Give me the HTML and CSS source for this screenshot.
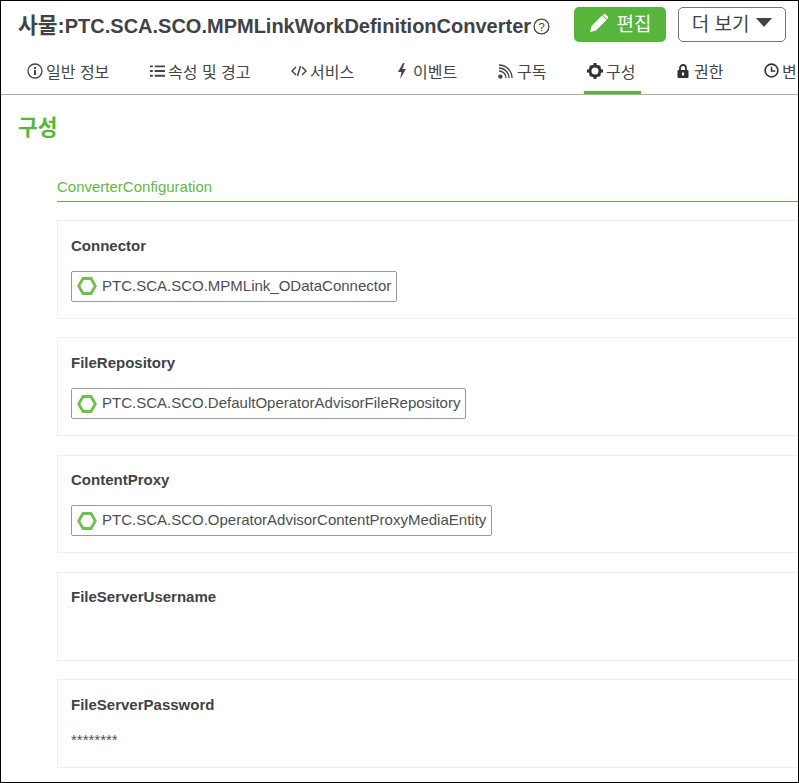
FILE: index.html
```html
<!DOCTYPE html>
<html lang="ko">
<head>
  <meta charset="utf-8">
  <title>PTC.SCA.SCO.MPMLinkWorkDefinitionConverter</title>
  <link rel="stylesheet" href="styles.css">
</head>
<body>
  <div class="page">
    <header class="top">
      <h1 class="title"><span class="title-kr">사물:</span>PTC.SCA.SCO.MPMLinkWorkDefinitionConverter</h1>
      <svg class="help" viewBox="0 0 16 16" width="17" height="17">
        <circle cx="8" cy="8" r="7" fill="none" stroke="#444" stroke-width="1.2"/>
        <text x="8" y="12" text-anchor="middle" class="help-mark">?</text>
      </svg>
      <button class="btn-edit">
        <svg viewBox="0 0 20 20" width="20" height="20"><path d="M1 19 L2.5 13 L13 2.5 L17.5 7 L7 17.5 Z M14.5 1.2 Q15.5 .4 16.5 1.2 L18.8 3.5 Q19.6 4.5 18.8 5.5 L18 6.2 L13.8 2 Z" fill="#fff"/></svg>
        편집
      </button>
      <button class="btn-more">더 보기 <span class="caret"></span></button>
    </header>

    <nav class="tabs">
      <a class="tab tab-info">
        <svg viewBox="0 0 16 16" width="16" height="16"><circle cx="8" cy="8" r="7" fill="none" stroke="#444" stroke-width="1.3"/><rect x="7" y="7" width="2" height="5" fill="#444"/><rect x="7" y="4" width="2" height="2" fill="#444"/></svg>
        일반 정보
      </a>
      <a class="tab tab-props">
        <svg viewBox="0 0 16 14" width="15" height="14"><path d="M0 1h3v2H0zM5 1h11v2H5zM0 6h3v2H0zM5 6h11v2H5zM0 11h3v2H0zM5 11h11v2H5z" fill="#444"/></svg>
        속성 및 경고
      </a>
      <a class="tab tab-services">
        <svg viewBox="0 0 16 12" width="16" height="12"><path d="M5 2 L1 6 L5 10 M11 2 L15 6 L11 10 M9.5 1 L6.5 11" fill="none" stroke="#444" stroke-width="1.5"/></svg>
        서비스
      </a>
      <a class="tab tab-events">
        <svg viewBox="0 0 10 16" width="10" height="16"><path d="M6 0 L1 9 H4.5 L3 16 L9 6 H5.5 L7.5 0 Z" fill="#444"/></svg>
        이벤트
      </a>
      <a class="tab tab-subs">
        <svg viewBox="0 0 16 16" width="16" height="16"><circle cx="2.4" cy="13.6" r="2.2" fill="#444"/><path d="M1 8 A7 7 0 0 1 8 15 M1 5 A10 10 0 0 1 11 15 M1 2 A13 13 0 0 1 14 15" fill="none" stroke="#444" stroke-width="1.3"/></svg>
        구독
      </a>
      <a class="tab tab-config active">
        <svg viewBox="0 0 16 16" width="16" height="16"><circle cx="8" cy="8" r="5" fill="none" stroke="#333" stroke-width="3"/><path d="M6.5 0h3v3h-3zM6.5 13h3v3h-3zM0 6.5h3v3H0zM13 6.5h3v3h-3zM2 4l2-2 2 2-2 2zM10 4l2-2 2 2-2 2zM2 12l2-2 2 2-2 2zM10 12l2-2 2 2-2 2z" fill="#333"/></svg>
        구성
      </a>
      <a class="tab tab-perms">
        <svg viewBox="0 0 12 14" width="12" height="14"><path d="M3 6V4a3 3 0 0 1 6 0v2" fill="none" stroke="#333" stroke-width="1.8"/><rect x="0.5" y="6" width="11" height="8" rx="1" fill="#333"/><rect x="5" y="8.5" width="2" height="3" fill="#fff"/></svg>
        권한
      </a>
      <a class="tab tab-history">
        <svg viewBox="0 0 16 16" width="15" height="15"><circle cx="8" cy="8" r="6.8" fill="none" stroke="#333" stroke-width="1.8"/><path d="M8 4v4.5h4" fill="none" stroke="#333" stroke-width="1.6"/></svg>
        변경 기록
      </a>
    </nav>

    <main class="content">
      <h2 class="section-title">구성</h2>
      <div class="group">
        <h3 class="group-title">ConverterConfiguration</h3>

        <section class="field">
          <div class="field-label">Connector</div>
          <span class="chip">
            <svg viewBox="0 0 20 18" width="20" height="18"><path d="M6 1.5 H14 L18.3 9 L14 16.5 H6 L1.7 9 Z" fill="none" stroke="#6cc24a" stroke-width="2.8"/></svg>
            PTC.SCA.SCO.MPMLink_ODataConnector
          </span>
        </section>

        <section class="field">
          <div class="field-label">FileRepository</div>
          <span class="chip">
            <svg viewBox="0 0 20 18" width="20" height="18"><path d="M6 1.5 H14 L18.3 9 L14 16.5 H6 L1.7 9 Z" fill="none" stroke="#6cc24a" stroke-width="2.8"/></svg>
            PTC.SCA.SCO.DefaultOperatorAdvisorFileRepository
          </span>
        </section>

        <section class="field">
          <div class="field-label">ContentProxy</div>
          <span class="chip">
            <svg viewBox="0 0 20 18" width="20" height="18"><path d="M6 1.5 H14 L18.3 9 L14 16.5 H6 L1.7 9 Z" fill="none" stroke="#6cc24a" stroke-width="2.8"/></svg>
            PTC.SCA.SCO.OperatorAdvisorContentProxyMediaEntity
          </span>
        </section>

        <section class="field field-text">
          <div class="field-label">FileServerUsername</div>
          <div class="field-value"></div>
        </section>

        <section class="field field-text">
          <div class="field-label">FileServerPassword</div>
          <div class="field-value">********</div>
        </section>
      </div>
    </main>
  </div>
</body>
</html>
```

FILE: styles.css
```css
html, body {
  margin: 0;
  height: 100%;
}
body {
  font-family: "Liberation Sans", "Noto Sans CJK KR", Arial, sans-serif;
  color: #333;
  background: #fff;
  overflow: hidden;
}
.page {
  height: 783px;
  box-sizing: border-box;
  border: 1px solid #000;
  overflow: hidden;
}

/* header */
.top {
  display: flex;
  align-items: center;
  height: 47px;
  padding: 0 12px 0 17px;
}
.title {
  margin: 0 0 2px;
  font-size: 20px;
  font-weight: bold;
  color: #3f4346;
  white-space: nowrap;
}
.title-kr {
  font-size: 21.5px;
}
.help {
  margin: 4px 0 0 2px;
}
.help-mark {
  font-size: 11px;
  fill: #444;
}
.btn-edit, .btn-more {
  font-family: inherit;
  font-size: 19px;
  border-radius: 5px;
  height: 35px;
  box-sizing: border-box;
  display: flex;
  align-items: center;
  justify-content: center;
  padding: 0 0 4px;
}
.btn-edit {
  margin-left: 24px;
  width: 92px;
  gap: 8px;
  background: #57b53c;
  color: #fff;
  border: none;
  font-weight: normal;
}
.btn-more {
  margin-left: 12px;
  width: 108px;
  gap: 7px;
  background: #fff;
  color: #3f4346;
  border: 1px solid #777;
}
.caret {
  width: 0;
  height: 0;
  border-left: 8px solid transparent;
  border-right: 8px solid transparent;
  border-top: 9px solid #3f4346;
}

/* tabs */
.tabs {
  display: flex;
  height: 47px;
  border-bottom: 1px solid #aaa;
  box-sizing: border-box;
  overflow: hidden;
}
.tab {
  display: flex;
  align-items: center;
  gap: 3px;
  height: 46px;
  padding-top: 2px;
  box-sizing: border-box;
  font-size: 16px;
  color: #444;
  white-space: nowrap;
  flex: none;
  border-bottom: 3px solid transparent;
}
.tab svg {
  flex: none;
}
.tab-info { margin-left: 26px; width: 123px; }
.tab-props { width: 141px; }
.tab-services { width: 106px; }
.tab-events { width: 101px; gap: 6px; }
.tab-subs { width: 86px; }
.tab-config { width: 57px; padding-left: 3px; margin-right: 36px; }
.tab-perms { width: 87px; gap: 5px; }
.tab.active {
  border-bottom-color: #57b53c;
}

/* content */
.content {
  padding: 0 0 0 17px;
}
.section-title {
  margin: 20px 0 0;
  font-size: 21.5px;
  line-height: 26px;
  font-weight: bold;
  color: #57b53c;
}
.group {
  margin: 33px 0 0 39px;
}
.group-title {
  margin: 0 -20px 0 0;
  height: 27.67px;
  padding-top: 4px;
  font-size: 15px;
  line-height: 18px;
  font-weight: normal;
  color: #62b846;
  border-bottom: 1px solid #6aa84f;
  box-sizing: border-box;
}
.field {
  height: 98.6px;
  margin: 18.73px -20px 0 0;
  padding: 15.8px 13px 0;
  box-sizing: border-box;
  border: 1px solid #eee;
}
.field:first-of-type {
  margin-top: 18.33px;
}
.field-text {
  height: 88.6px;
  padding-top: 15.4px;
}
.field-label {
  font-size: 15px;
  line-height: 18px;
  font-weight: bold;
  color: #3f4346;
}
.chip {
  display: inline-flex;
  align-items: center;
  gap: 5px;
  height: 31px;
  margin-top: 16px;
  padding: 0 5px 2px;
  box-sizing: border-box;
  border: 1px solid #999;
  border-radius: 2px;
  font-size: 15px;
  color: #4a4f52;
}
.chip svg {
  margin-top: 2px;
}
.field-value {
  margin-top: 17px;
  font-size: 15px;
  line-height: 18px;
  color: #4a4f52;
}
```
